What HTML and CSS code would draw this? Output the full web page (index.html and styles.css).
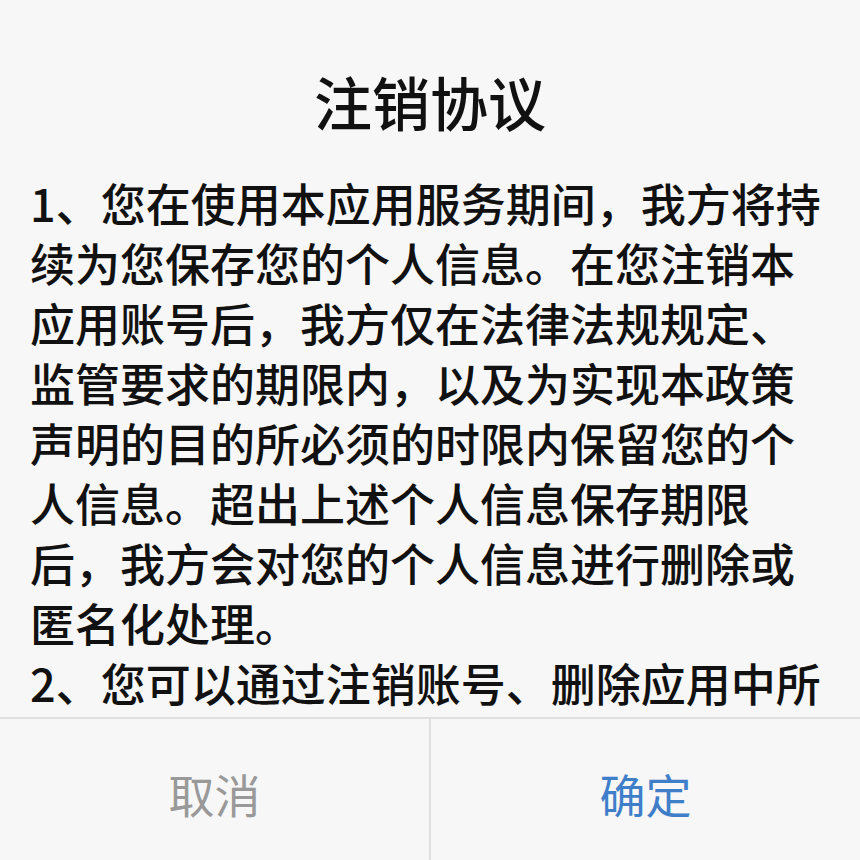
FILE: index.html
```html
<!DOCTYPE html>
<html lang="zh-CN">
<head>
    <meta charset="UTF-8">
    <meta name="viewport" content="width=device-width, initial-scale=1.0">
    <title>注销协议</title>
    <link rel="stylesheet" href="styles.css">
</head>
<body>
    <div class="dialog">
        <h1 class="title">注销协议</h1>
        <div class="content">
            <p class="text">1、您在使用本应用服务期间，我方将持续为您保存您的个人信息。在您注销本应用账号后，我方仅在法律法规规定、监管要求的期限内，以及为实现本政策声明的目的所必须的时限内保留您的个人信息。超出上述个人信息保存期限后，我方会对您的个人信息进行删除或匿名化处理。</p>
            <p class="text">2、您可以通过注销账号、删除应用中所</p>
        </div>
        <div class="buttons">
            <div class="btn cancel">取消</div>
            <div class="btn confirm">确定</div>
        </div>
    </div>
</body>
</html>
```

FILE: styles.css
```css
body{
    margin: 0px;
    padding: 0px;
    background-color: #f7f7f7;
    font-family: "Noto Sans CJK SC", "Noto Sans", sans-serif;
}
.dialog{
    display: flex;
    flex-direction: column;
    height: 860px;
    overflow: hidden;
}
.title{
    margin: 0px;
    padding-top: 72px;
    font-size: 58px;
    line-height: 58px;
    font-weight: 500;
    text-align: center;
    color: #111;
}
.content{
    flex: 1;
    margin-top: 43px;
    padding: 0px 30px;
}
.text{
    margin: 0px;
    font-size: 45px;
    line-height: 60px;
    font-weight: 500;
    color: #111;
}
.buttons{
    display: flex;
    height: 141px;
    border-top: 2px solid #dedede;
}
.btn{
    flex: 1;
    display: flex;
    align-items: center;
    justify-content: center;
    padding-top: 6px;
    font-size: 46px;
}
.cancel{
    color: #999;
}
.confirm{
    color: #3f7ec9;
    border-left: 2px solid #dedede;
}
```
